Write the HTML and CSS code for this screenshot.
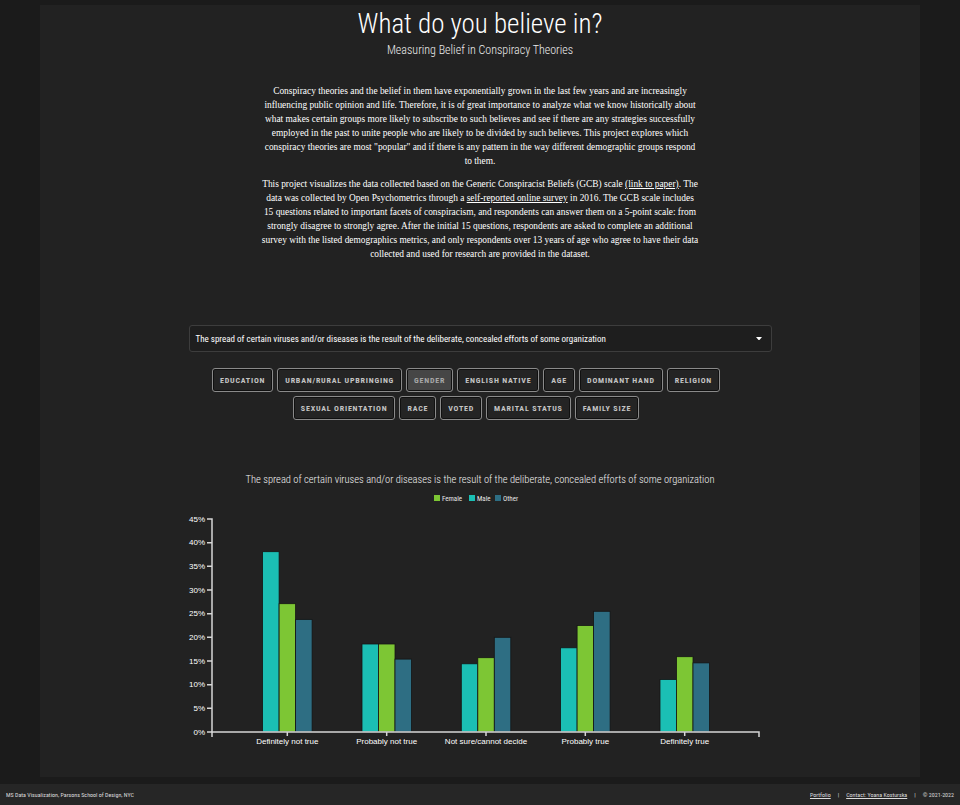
FILE: index.html
```html
<!DOCTYPE html>
<html lang="en">
<head>
<meta charset="utf-8">
<title>What do you believe in?</title>
<link rel="stylesheet" href="styles.css">
</head>
<body>
<div class="page">
  <main class="panel">
    <header class="hero">
      <h1 class="title">What do you believe in?</h1>
      <p class="subtitle">Measuring Belief in Conspiracy Theories</p>
    </header>

    <section class="intro">
      <p>Conspiracy theories and the belief in them have exponentially grown in the last few years and are increasingly<br>influencing public opinion and life. Therefore, it is of great importance to analyze what we know historically about<br>what makes certain groups more likely to subscribe to such believes and see if there are any strategies successfully<br>employed in the past to unite people who are likely to be divided by such believes. This project explores which<br>conspiracy theories are most "popular" and if there is any pattern in the way different demographic groups respond<br>to them.</p>
      <p>This project visualizes the data collected based on the Generic Conspiracist Beliefs (GCB) scale <a href="#">(link to paper)</a>. The<br>data was collected by Open Psychometrics through a <a href="#">self-reported online survey</a> in 2016. The GCB scale includes<br>15 questions related to important facets of conspiracism, and respondents can answer them on a 5-point scale: from<br>strongly disagree to strongly agree. After the initial 15 questions, respondents are asked to complete an additional<br>survey with the listed demographics metrics, and only respondents over 13 years of age who agree to have their data<br>collected and used for research are provided in the dataset.</p>
    </section>

    <section class="controls">
      <div class="select">
        <span class="select-text">The spread of certain viruses and/or diseases is the result of the deliberate, concealed efforts of some organization</span>
        <svg class="caret" width="6" height="3.5" viewBox="0 0 6 3.5"><polygon points="0,0 6,0 3,3.5" fill="#ffffff"/></svg>
      </div>
      <div class="filters">
        <button class="filter">Education</button>
        <button class="filter">Urban/Rural Upbringing</button>
        <button class="filter is-active">Gender</button>
        <button class="filter">English Native</button>
        <button class="filter">Age</button>
        <button class="filter">Dominant Hand</button>
        <button class="filter">Religion</button>
        <button class="filter">Sexual Orientation</button>
        <button class="filter">Race</button>
        <button class="filter">Voted</button>
        <button class="filter">Marital Status</button>
        <button class="filter">Family Size</button>
      </div>
    </section>

    <svg class="chart" width="880" height="290" viewBox="0 0 880 290">
      <text class="chart-title" x="440" y="18" text-anchor="middle" textLength="469" lengthAdjust="spacingAndGlyphs">The spread of certain viruses and/or diseases is the result of the deliberate, concealed efforts of some organization</text>

      <g class="legend">
        <rect x="394" y="30" width="6" height="6" fill="#7dc634"/>
        <text x="402" y="35.5">Female</text>
        <rect x="429" y="30" width="6" height="6" fill="#1bbfb4"/>
        <text x="437" y="35.5">Male</text>
        <rect x="455" y="30" width="6" height="6" fill="#2e6e83"/>
        <text x="463" y="35.5">Other</text>
      </g>

      <g class="bars">
        <rect x="222.6" y="86.7" width="16.5" height="180.3" fill="#1bbfb4"/>
        <rect x="239.1" y="138.7" width="16.5" height="128.3" fill="#7dc634"/>
        <rect x="255.6" y="154.4" width="16.5" height="112.6" fill="#2e6e83"/>

        <rect x="322" y="179" width="16.5" height="88" fill="#1bbfb4"/>
        <rect x="338.5" y="179" width="16.5" height="88" fill="#7dc634"/>
        <rect x="355" y="194.1" width="16.5" height="72.9" fill="#2e6e83"/>

        <rect x="421.3" y="198.8" width="16.5" height="68.2" fill="#1bbfb4"/>
        <rect x="437.8" y="192.7" width="16.5" height="74.3" fill="#7dc634"/>
        <rect x="454.3" y="172.3" width="16.5" height="94.7" fill="#2e6e83"/>

        <rect x="520.6" y="182.8" width="16.5" height="84.2" fill="#1bbfb4"/>
        <rect x="537.1" y="160.5" width="16.5" height="106.5" fill="#7dc634"/>
        <rect x="553.6" y="146.3" width="16.5" height="120.7" fill="#2e6e83"/>

        <rect x="620" y="214.5" width="16.5" height="52.5" fill="#1bbfb4"/>
        <rect x="636.5" y="191.7" width="16.5" height="75.3" fill="#7dc634"/>
        <rect x="653" y="197.9" width="16.5" height="69.1" fill="#2e6e83"/>
      </g>

      <g class="axis">
        <path class="domain" d="M167,54H172V267H167"/>
        <path class="domain" d="M172,272V267H719V272"/>
        <path class="tick" d="M167,77.7H172M167,101.3H172M167,125H172M167,148.7H172M167,172.3H172M167,196H172M167,219.7H172M167,243.3H172"/>
        <path class="tick" d="M247.3,267V271M346.7,267V271M446,267V271M545.3,267V271M644.7,267V271"/>
      </g>

      <g class="axis-labels y-labels">
        <text x="165" y="56.7">45%</text>
        <text x="165" y="80.4">40%</text>
        <text x="165" y="104">35%</text>
        <text x="165" y="127.7">30%</text>
        <text x="165" y="151.4">25%</text>
        <text x="165" y="175">20%</text>
        <text x="165" y="198.7">15%</text>
        <text x="165" y="222.4">10%</text>
        <text x="165" y="246">5%</text>
        <text x="165" y="269.7">0%</text>
      </g>

      <g class="axis-labels x-labels">
        <text x="247.3" y="279">Definitely not true</text>
        <text x="346.7" y="279">Probably not true</text>
        <text x="446" y="279">Not sure/cannot decide</text>
        <text x="545.3" y="279">Probably true</text>
        <text x="644.7" y="279">Definitely true</text>
      </g>
    </svg>
  </main>

  <footer class="footer">
    <span class="footer-left">MS Data Visualization, Parsons School of Design, NYC</span>
    <span class="footer-right"><a href="#">Portfolio</a><span class="sep">|</span><a href="#">Contact: Yoana Kosturska</a><span class="sep">|</span>© 2021-2022</span>
  </footer>
</div>
</body>
</html>
```

FILE: styles.css
```css
html, body {
  margin: 0;
  padding: 0;
  background: #1b1b1b;
}

body {
  font-family: "Roboto Condensed", Roboto, "Liberation Sans", sans-serif;
  font-stretch: condensed;
  color: #eeeeee;
}

.page {
  padding-top: 5px;
}

.panel {
  margin: 0 40px;
  background: #222222;
  padding: 1px 0 22px;
  display: flex;
  flex-direction: column;
  align-items: center;
}

.hero {
  text-align: center;
}

.title {
  margin: 0;
  font-size: 27px;
  line-height: 36px;
  font-weight: 300;
  color: #ffffff;
}

.subtitle {
  margin: 0;
  font-size: 12px;
  line-height: 16px;
  font-weight: 300;
  color: #ededed;
}

.intro {
  margin-top: 26px;
  width: 470px;
  font-family: "Liberation Serif", "Times New Roman", serif;
  font-stretch: normal;
  font-size: 9.4px;
  line-height: 14px;
  text-align: center;
  color: #ffffff;
}

.intro p {
  margin: 0;
}

.intro p + p {
  margin-top: 9px;
}

.intro a {
  color: #ffffff;
  text-decoration: underline;
}

.controls {
  margin-top: 64px;
  width: 583px;
  display: flex;
  flex-direction: column;
}

.select {
  box-sizing: border-box;
  height: 27px;
  border: 1px solid #3d3d3d;
  border-radius: 3px;
  background: #1e1e1e;
  display: flex;
  align-items: center;
  justify-content: space-between;
  padding: 0 9px 0 6px;
}

.select-text {
  font-size: 9px;
  font-weight: 400;
  color: #ffffff;
  white-space: nowrap;
}

.caret {
  display: block;
}

.filters {
  margin-top: 16px;
  padding-right: 28px;
  display: flex;
  flex-wrap: wrap;
  justify-content: center;
  gap: 4px;
}

.filter {
  box-sizing: border-box;
  height: 24px;
  padding: 0 7px;
  border: 1px solid #8a8a8a;
  border-radius: 3px;
  box-shadow: inset 0 0 0 1px #101010;
  background: #242424;
  color: #c4c4c4;
  font-family: "Roboto Condensed", Roboto, "Liberation Sans", sans-serif;
  font-stretch: condensed;
  font-size: 8px;
  font-weight: 700;
  letter-spacing: 0.8px;
  text-transform: uppercase;
}

.filter.is-active {
  background: #464646;
  color: #a8a8a8;
}

.chart {
  display: block;
  margin-top: 45px;
}

.chart-title {
  font-size: 11px;
  font-weight: 300;
  fill: #f0f0f0;
}

.legend text {
  font-size: 7px;
  fill: #e6e6e6;
}

.bars rect {
  stroke: #151515;
  stroke-width: 0.8;
}

.axis path {
  fill: none;
  stroke: #d6d6d6;
  stroke-width: 1.5;
}

.axis-labels text {
  font-family: "Liberation Sans", Arial, sans-serif;
  font-stretch: normal;
  font-size: 8px;
  fill: #ffffff;
}

.y-labels text {
  text-anchor: end;
}

.x-labels text {
  text-anchor: middle;
}

.footer {
  margin-top: 7px;
  height: 21px;
  background: #262626;
  display: flex;
  align-items: center;
  justify-content: space-between;
  padding: 0 6px;
  font-size: 6px;
  color: #dddddd;
}

.footer a {
  color: #dddddd;
  text-decoration: underline;
}

.footer .sep {
  margin: 0 7px;
}
```
